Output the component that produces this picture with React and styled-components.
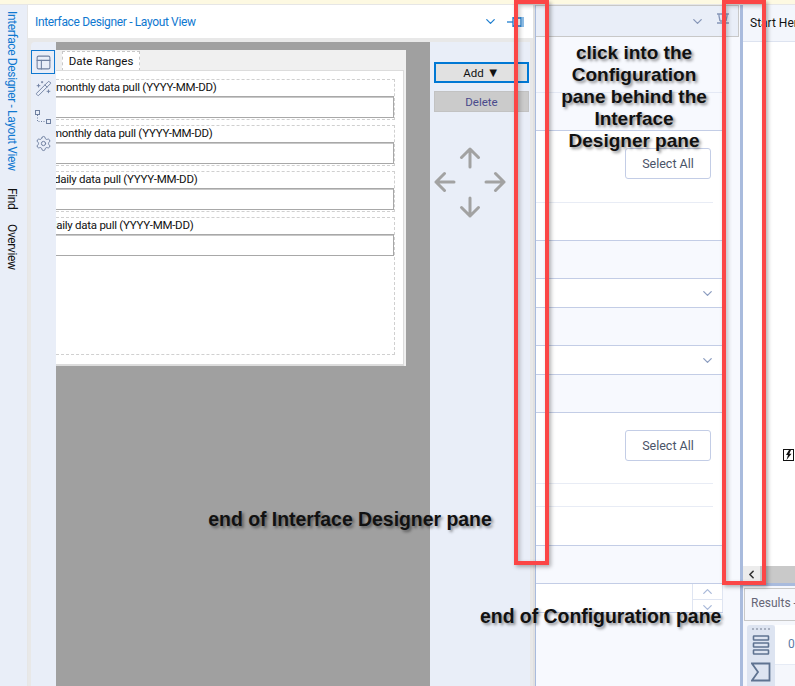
import React from "react"
import styled, { createGlobalStyle } from "styled-components"
import { ChevronDown, ChevronUp, ChevronLeft, PanelsTopLeft, WandSparkles, Settings } from "lucide-react"

const GlobalStyle = createGlobalStyle`
  html, body {
    margin: 0;
    padding: 0;
    background: #fff;
  }
  * {
    box-sizing: border-box;
  }
`

const Page = styled.div`
  position: relative;
  width: 795px;
  height: 686px;
  overflow: hidden;
  display: flex;
  flex-direction: column;
  font-family: Roboto, "Open Sans", sans-serif;
  font-size: 12px;
  color: #111;
`

const NoticeStrip = styled.div`
  height: 4px;
  flex: none;
  background: #fdf9e2;
`

const Workspace = styled.div`
  flex: 1;
  min-height: 0;
  display: flex;
  background: #e6e6e6;
  padding-top: 1px;
`

/* far left rail with the rotated pane names */
const SideRail = styled.div`
  width: 27px;
  flex: none;
  background: #e9eef8;
  display: flex;
  flex-direction: column;
  align-items: center;
  padding: 6px 4px 0 0;
`

const RailLabel = styled.div`
  writing-mode: vertical-rl;
  font-size: 12px;
  letter-spacing: -0.38px;
  line-height: 14px;
  white-space: nowrap;
  margin-bottom: ${(props) => props.$gap || 0}px;
  color: ${(props) => (props.$active ? "#0f78d0" : "#111")};
`

const DesignerPane = styled.div`
  width: 505px;
  margin-left: 1px;
  flex: none;
  display: flex;
  flex-direction: column;
  background: #e8e8e8;
`

const DesignerHeader = styled.div`
  height: 33px;
  flex: none;
  background: #fff;
  display: flex;
  align-items: center;
  padding: 0 9px 0 7px;
  margin-bottom: 4px;
`

const HeaderTitle = styled.div`
  flex: 1;
  font-size: 12px;
  letter-spacing: -0.35px;
  color: #0f78d0;
`

const HeaderGap = styled.div`
  width: 9px;
`

const DesignerBody = styled.div`
  flex: 1;
  min-height: 0;
  display: flex;
`

const ToolStrip = styled.div`
  width: 25px;
  margin-left: 3px;
  flex: none;
  background: #e9eef8;
  border-radius: 4px 0 0 0;
  display: flex;
  flex-direction: column;
  align-items: flex-start;
  padding-top: 8px;
`

const ToolButton = styled.div`
  width: 24px;
  height: 24px;
  margin-bottom: ${(props) => props.$gap || 0}px;
  display: flex;
  align-items: center;
  justify-content: center;
  color: #6f80a0;
  border: ${(props) => (props.$active ? "1px solid #0f78d0" : "1px solid transparent")};
`

const Canvas = styled.div`
  width: 374px;
  flex: none;
  background: #a0a0a0;
  padding-top: 8px;
  overflow: hidden;
`

const FormPanel = styled.div`
  width: 350px;
  height: 316px;
  background: #f0f0f0;
  display: flex;
  flex-direction: column;
  padding-right: 2px;
`

const TabRow = styled.div`
  height: 20px;
  flex: none;
  padding: 1px 0 0 6px;
`

const FormTab = styled.div`
  width: 78px;
  height: 20px;
  background: #fff;
  border: 1px dashed #c8c8c8;
  border-bottom: 0;
  font-size: 11.5px;
  line-height: 18px;
  text-align: center;
`

const TabBody = styled.div`
  flex: 1;
  background: #fff;
  border: 2px solid #dcdcdc;
  border-width: 1px 1px 2px 0;
  padding-top: 8px;
  display: flex;
  flex-direction: column;
  gap: 5px;
`

const FieldBox = styled.div`
  width: 339px;
  height: 41px;
  flex: none;
  border: 1px dashed #d0d0d0;
  border-left: 0;
  overflow: hidden;
  &:last-child {
    height: 138px;
  }
`

const FieldLabel = styled.div`
  height: 16px;
  font-size: 11.5px;
  letter-spacing: -0.26px;
  line-height: 15px;
  white-space: nowrap;
  margin-left: ${(props) => props.$shift}px;
`

const FieldInput = styled.div`
  width: 338px;
  height: 22px;
  background: #fff;
  border: 1px solid #a8a8a8;
  border-left: 0;
  box-shadow: inset 0 1px 0 #c8c8c8;
`

const ActionColumn = styled.div`
  width: 100px;
  flex: none;
  background: #e9eef8;
  display: flex;
  flex-direction: column;
  padding: 20px 1px 0 4px;
`

const ActionButton = styled.div`
  height: 21px;
  margin-bottom: 8px;
  display: flex;
  align-items: center;
  justify-content: center;
  gap: 3px;
  font-size: 11.5px;
  background: ${(props) => (props.$disabled ? "#cbcbcb" : "#e1e1e1")};
  color: ${(props) => (props.$disabled ? "#4a4a8c" : "#111")};
  border: ${(props) => (props.$disabled ? "1px solid #c2c2c2" : "2px solid #0078d4")};
`

const DropMark = styled.span`
  font-size: 13px;
  line-height: 1;
`

const MoveArrows = styled.svg`
  display: block;
  margin: 27px 0 0 0;
`

const PaneGap = styled.div`
  width: 2px;
  flex: none;
  background: #e0e0e0;
`

const ConfigPane = styled.div`
  width: 208px;
  flex: none;
  display: flex;
  flex-direction: column;
  background: #f7f9fe;
  border-left: 1px solid #a9bbdd;
  border-right: 3px solid #a9bbdd;
  position: relative;
`

const ConfigHeader = styled.div`
  height: 32px;
  width: 203px;
  flex: none;
  background: #e9eef8;
  border: 1px solid #c8c8c8;
  border-left: 0;
  display: flex;
  align-items: center;
  justify-content: flex-end;
  gap: 11px;
  padding-right: 8px;
  color: #8696b8;
`

const ConfigScroll = styled.div`
  flex: 1;
  min-height: 0;
  padding: 4px 17px 0 0;
`

const Band = styled.div`
  height: ${(props) => props.$h}px;
  border-bottom: 1px solid ${(props) => (props.$soft ? "#e4e9f5" : "#c3cde6")};
`

const DropRow = styled.div`
  height: 29px;
  background: #fff;
  border-bottom: 1px solid #c3cde6;
  display: flex;
  align-items: center;
  justify-content: flex-end;
  padding-right: 8px;
  color: #8c9dc0;
`

const SelectSection = styled.div`
  height: ${(props) => props.$h}px;
  background: #fff;
  border-bottom: 1px solid #c3cde6;
  padding-top: ${(props) => props.$top}px;
`

const SelectAll = styled.div`
  width: 86px;
  height: 31px;
  margin-left: 89px;
  background: #fff;
  border: 1px solid #c3cde6;
  border-radius: 3px;
  color: #4a5468;
  font-size: 12.5px;
  display: flex;
  align-items: center;
  justify-content: center;
`

const Divider = styled.div`
  height: 1px;
  margin: ${(props) => props.$top}px 10px 0 0;
  background: #e8ecf5;
`

const SpinRow = styled.div`
  height: 29px;
  background: #fff;
  border-bottom: 1px solid #c3cde6;
  display: flex;
  justify-content: flex-end;
`

const Spinner = styled.div`
  width: 31px;
  border-left: 1px solid #dfe5f2;
  border-right: 1px solid #dfe5f2;
  display: flex;
  flex-direction: column;
  color: #a9b9d9;
`

const SpinCell = styled.div`
  flex: 1;
  display: flex;
  align-items: center;
  justify-content: center;
  border-bottom: ${(props) => (props.$first ? "1px solid #dfe5f2" : "0")};
`

const RightPane = styled.div`
  flex: 1;
  min-width: 0;
  display: flex;
  flex-direction: column;
  background: #f5f7fc;
`

const DocTab = styled.div`
  height: 37px;
  flex: none;
  padding-left: 7px;
  background: #f3f6fc;
  border-bottom: 1px solid #dde3f0;
  font-size: 12px;
  line-height: 36px;
  white-space: nowrap;
  overflow: hidden;
`

const DocCanvas = styled.div`
  flex: 1;
  min-height: 0;
  background: #fff;
  position: relative;
`

/* tool node sitting on the workflow canvas */
const FlowNode = styled.div`
  position: absolute;
  left: 40px;
  top: 407px;
  width: 11px;
  height: 12px;
  border: 1px solid #111;
  background: #fff;
  display: flex;
  align-items: center;
  justify-content: center;
`

const HScroll = styled.div`
  height: 17px;
  flex: none;
  background: #c9c9c9;
  display: flex;
`

const ScrollArrow = styled.div`
  width: 17px;
  background: #ececec;
  color: #333;
  display: flex;
  align-items: center;
  justify-content: center;
`

const ResultsSplit = styled.div`
  height: 3px;
  flex: none;
  background: #a9bbdd;
`

const ResultsTab = styled.div`
  height: 33px;
  flex: none;
  margin: 2px 0 0 1px;
  padding-left: 6px;
  border: 1px solid #c8c8c8;
  border-right: 0;
  background: #f5f7fc;
  color: #667;
  font-size: 12px;
  line-height: 29px;
  white-space: nowrap;
  overflow: hidden;
`

const ResultsBody = styled.div`
  height: 65px;
  flex: none;
  display: flex;
  padding: 4px 0 0 4px;
`

const ResultsTools = styled.div`
  width: 28px;
  flex: none;
  background: #dde4f1;
  border-radius: 3px 3px 0 0;
  display: flex;
  flex-direction: column;
  align-items: center;
  padding-top: 3px;
  gap: 7px;
  color: #5f7391;
`

const GripDots = styled.div`
  width: 18px;
  margin-bottom: -2px;
  border-top: 2px dotted #a8b0c0;
`

const ResultsCell = styled.div`
  flex: 1;
  height: 40px;
  background: #fff;
  border-bottom: 1px solid #e6ebf5;
  padding-left: 13px;
  line-height: 38px;
  color: #5b7aa5;
  font-size: 12px;
`

const RedBox = styled.div`
  position: absolute;
  top: 0;
  left: ${(props) => props.$left}px;
  width: ${(props) => props.$w}px;
  height: ${(props) => props.$h}px;
  border: 4px solid #fb4646;
  box-shadow: 2px 2px 4px rgba(0, 0, 0, 0.3), inset 2px 2px 4px rgba(0, 0, 0, 0.22);
`

const Callout = styled.div`
  position: absolute;
  left: ${(props) => props.$left}px;
  top: ${(props) => props.$top}px;
  width: ${(props) => props.$w}px;
  font-family: "Liberation Sans", Arial, sans-serif;
  font-weight: 700;
  font-size: ${(props) => props.$size}px;
  line-height: 22px;
  text-align: center;
  color: #111;
  white-space: ${(props) => (props.$wrap ? "normal" : "nowrap")};
  text-shadow: 2px 2px 3px rgba(0, 0, 0, 0.45);
`

const PinSide = () => (
  <svg width="17" height="14" viewBox="0 0 17 14" fill="none" stroke="#1f7fd0" strokeWidth="1.3">
    <path d="M0 7h6" />
    <path d="M6 3h8M6 11h8M6 2v10M14 2v10" />
    <path d="M16 2v10" strokeWidth="1" />
  </svg>
)

const PinDown = () => (
  <svg width="14" height="16" viewBox="0 0 14 16" fill="none" stroke="#8696b8" strokeWidth="1.3">
    <path d="M1 1h12M3 1v2l1 5M11 1v2l-1 5" />
    <path d="M1 10h12M4 8h6M7 10v6" />
  </svg>
)

const FlowIcon = () => (
  <svg width="18" height="16" viewBox="0 0 18 16" fill="none" stroke="currentColor">
    <rect x="1.5" y="1.5" width="4" height="4" />
    <rect x="12.5" y="10.5" width="4" height="4" />
    <path d="M3.500 6v6.500h8.500" strokeDasharray="1 1.5" />
  </svg>
)

const Bolt = () => (
  <svg width="7" height="10" viewBox="0 0 7 10" fill="#111">
    <path d="M4 0L1 5h2L1.500 10 6.500 3.800H4.300L6 0z" />
  </svg>
)

const StackIcon = () => (
  <svg width="18" height="20" viewBox="0 0 18 20" fill="none" stroke="currentColor" strokeWidth="1.6">
    <rect x="1.5" y="1" width="15" height="4" rx="0.5" />
    <rect x="1.5" y="8" width="15" height="4" rx="0.5" />
    <rect x="1.5" y="15" width="15" height="4" rx="0.5" />
  </svg>
)

const TagIcon = () => (
  <svg width="20" height="20" viewBox="0 0 20 20" fill="none" stroke="currentColor" strokeWidth="1.8">
    <path d="M1 1.500h17.500v17H1L7 10z" />
  </svg>
)

const Arrows = () => (
  <MoveArrows width="72" height="72" viewBox="0 0 72 72" fill="none" stroke="#a2a2a2" strokeWidth="3" strokeLinecap="round" strokeLinejoin="round">
    <path d="M36 2v18M27.500 10.500L36 2l8.500 8.500" />
    <path d="M36 69V51M27.500 60.500L36 69l8.500-8.500" />
    <path d="M2 35h18M10.500 26.500L2 35l8.500 8.500" />
    <path d="M70 35H52M61.500 26.500L70 35l-8.500 8.500" />
  </MoveArrows>
)

const fields = [
  { label: "monthly data pull (YYYY-MM-DD)", shift: 0 },
  { label: "monthly data pull (YYYY-MM-DD)", shift: -4 },
  { label: "daily data pull (YYYY-MM-DD)", shift: -2 },
  { label: "daily data pull (YYYY-MM-DD)", shift: -6 },
]

export default function App() {
  return (
    <Page>
      <GlobalStyle />
      <NoticeStrip />
      <Workspace>
        <SideRail>
          <RailLabel $active $gap={17}>Interface Designer - Layout View</RailLabel>
          <RailLabel $gap={15}>Find</RailLabel>
          <RailLabel>Overview</RailLabel>
        </SideRail>
        <DesignerPane>
          <DesignerHeader>
            <HeaderTitle>Interface Designer - Layout View</HeaderTitle>
            <ChevronDown size={15} color="#1f7fd0" strokeWidth={2} />
            <HeaderGap />
            <PinSide />
          </DesignerHeader>
          <DesignerBody>
            <ToolStrip>
              <ToolButton $active $gap={2}>
                <PanelsTopLeft size={17} strokeWidth={1.5} />
              </ToolButton>
              <ToolButton $gap={5}>
                <WandSparkles size={17} strokeWidth={1.3} />
              </ToolButton>
              <ToolButton $gap={2}>
                <FlowIcon />
              </ToolButton>
              <ToolButton>
                <Settings size={17} strokeWidth={1.4} />
              </ToolButton>
            </ToolStrip>
            <Canvas>
              <FormPanel>
                <TabRow>
                  <FormTab>Date Ranges</FormTab>
                </TabRow>
                <TabBody>
                  {fields.map((f, i) => (
                    <FieldBox key={i}>
                      <FieldLabel $shift={f.shift}>{f.label}</FieldLabel>
                      <FieldInput />
                    </FieldBox>
                  ))}
                </TabBody>
              </FormPanel>
            </Canvas>
            <ActionColumn>
              <ActionButton>
                Add <DropMark>▼</DropMark>
              </ActionButton>
              <ActionButton $disabled>Delete</ActionButton>
              <Arrows />
            </ActionColumn>
          </DesignerBody>
        </DesignerPane>
        <PaneGap />
        <ConfigPane>
          <ConfigHeader>
            <ChevronDown size={15} strokeWidth={2} />
            <PinDown />
          </ConfigHeader>
          <ConfigScroll>
            <Band $h={52} $soft />
            <Band $h={38} />
            <SelectSection $h={110} $top={17}>
              <SelectAll>Select All</SelectAll>
              <Divider $top={23} />
            </SelectSection>
            <Band $h={38} />
            <DropRow>
              <ChevronDown size={15} strokeWidth={2} />
            </DropRow>
            <Band $h={38} />
            <DropRow>
              <ChevronDown size={15} strokeWidth={2} />
            </DropRow>
            <Band $h={38} />
            <SelectSection $h={133} $top={17}>
              <SelectAll>Select All</SelectAll>
              <Divider $top={22} />
              <Divider $top={22} />
            </SelectSection>
            <Band $h={38} />
            <SpinRow>
              <Spinner>
                <SpinCell $first>
                  <ChevronUp size={15} strokeWidth={2} />
                </SpinCell>
                <SpinCell>
                  <ChevronDown size={15} strokeWidth={2} />
                </SpinCell>
              </Spinner>
            </SpinRow>
          </ConfigScroll>
        </ConfigPane>
        <RightPane>
          <DocTab>Start Her</DocTab>
          <DocCanvas>
            <FlowNode>
              <Bolt />
            </FlowNode>
          </DocCanvas>
          <HScroll>
            <ScrollArrow>
              <ChevronLeft size={13} strokeWidth={3} />
            </ScrollArrow>
          </HScroll>
          <ResultsSplit />
          <ResultsTab>Results -</ResultsTab>
          <ResultsBody>
            <ResultsTools>
              <GripDots />
              <StackIcon />
              <TagIcon />
            </ResultsTools>
            <ResultsCell>0</ResultsCell>
          </ResultsBody>
        </RightPane>
      </Workspace>

      <RedBox $left={514} $w={35} $h={565} />
      <RedBox $left={722} $w={44} $h={585} />
      <Callout $left={554} $top={42} $w={160} $size={19} $wrap>
        click into the Configuration pane behind the Interface Designer pane
      </Callout>
      <Callout $left={208} $top={508} $w={284} $size={19.4}>
        end of Interface Designer pane
      </Callout>
      <Callout $left={480} $top={605} $w={241} $size={19.4}>
        end of Configuration pane
      </Callout>
    </Page>
  )
}
